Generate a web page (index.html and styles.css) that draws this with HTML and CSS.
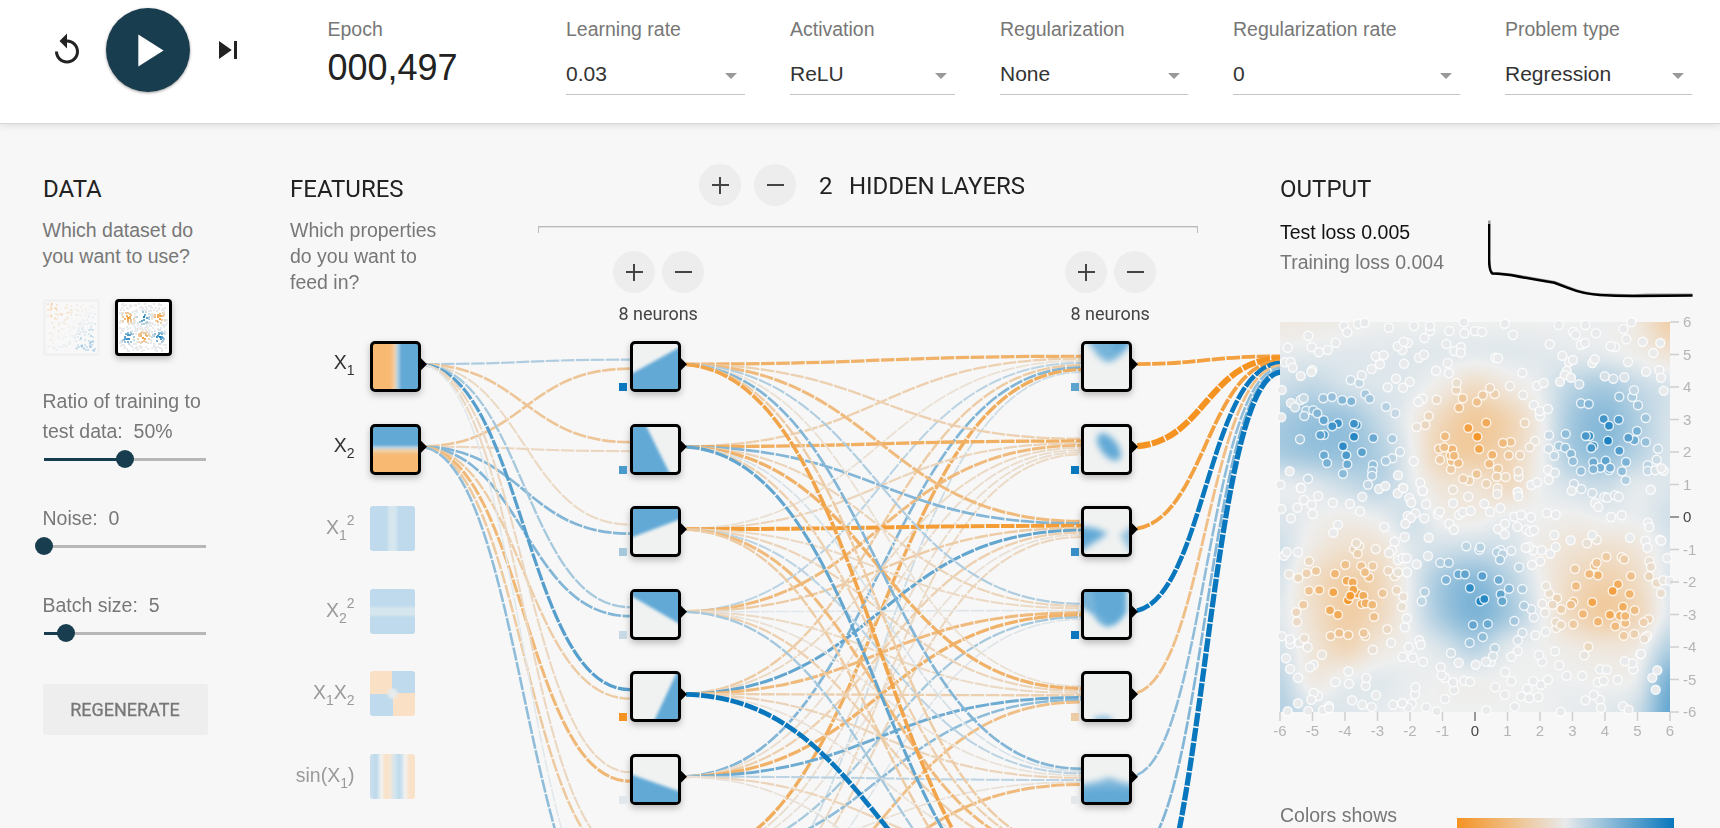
FILE: index.html
```html
<!DOCTYPE html>
<html lang="en">
<head>
<meta charset="utf-8">
<title>Neural Network Playground</title>
<link rel="stylesheet" href="styles.css">
</head>
<body>
<div class="app">
  <header class="topbar">
    <div class="controls">
      <svg class="icon" viewBox="0 0 24 24"><path d="M12 5V1L7 6l5 5V7c3.31 0 6 2.69 6 6s-2.69 6-6 6-6-2.69-6-6H4c0 4.42 3.58 8 8 8s8-3.58 8-8-3.58-8-8-8z"/></svg>
      <div class="play"><svg viewBox="0 0 24 24"><path d="M8 5v14l11-7z"/></svg></div>
      <svg class="icon" viewBox="0 0 24 24"><path d="M6 18l8.5-6L6 6v12zM16 6v12h2V6h-2z"/></svg>
    </div>
    <div class="epoch"><div class="label">Epoch</div><div class="epoch-value">000,497</div></div>
    <div class="field f-rate"><div class="label">Learning rate</div><div class="select">0.03</div></div>
    <div class="field f-act"><div class="label">Activation</div><div class="select">ReLU</div></div>
    <div class="field f-reg"><div class="label">Regularization</div><div class="select">None</div></div>
    <div class="field f-regrate"><div class="label">Regularization rate</div><div class="select">0</div></div>
    <div class="field f-problem"><div class="label">Problem type</div><div class="select">Regression</div></div>
  </header>

  <main class="main">
    <section class="column">
      <h2>DATA</h2>
      <p>Which dataset do<br>you want to use?</p>
      <div class="thumbs">
        <div class="thumb dim"><canvas id="plane" width="51" height="51"></canvas></div>
        <div class="thumb"><canvas id="gauss" width="51" height="51"></canvas></div>
      </div>
      <div class="slider-label first">Ratio of training to<br>test data:&nbsp; 50%</div>
      <div class="slider half"><span class="knob"></span></div>
      <div class="slider-label">Noise:&nbsp; 0</div>
      <div class="slider zero"><span class="knob"></span></div>
      <div class="slider-label">Batch size:&nbsp; 5</div>
      <div class="slider low"><span class="knob"></span></div>
      <div class="regenerate">REGENERATE</div>
    </section>

    <section class="column">
      <h2>FEATURES</h2>
      <p>Which properties<br>do you want to<br>feed in?</p>
    </section>

    <section class="hidden-layers">
      <div class="layers-head">
        <span class="round plus"></span><span class="round"></span>
        <span class="layers-count">2</span><span class="layers-title">HIDDEN LAYERS</span>
      </div>
      <div class="bracket"></div>
      <div class="layer-controls">
        <div class="layer-control"><div class="pair"><span class="round plus"></span><span class="round"></span></div><div class="neurons">8 neurons</div></div>
        <div class="layer-control"><div class="pair"><span class="round plus"></span><span class="round"></span></div><div class="neurons">8 neurons</div></div>
      </div>
    </section>

    <section class="column output">
      <h2>OUTPUT</h2>
      <div class="metrics">
        <div class="losses"><div class="test">Test loss 0.005</div><div class="train">Training loss 0.004</div></div>
        <svg class="chart" width="206" height="82" viewBox="0 0 206 82">
          <path class="line-train" d="M1.3 2.5V40Q1.5 54 5 55L22 56.5L44 60.3L67 64.2L88 72.3Q98 75.8 112 76.6L145 77.6L160 76.8H205"/>
          <path class="line-test" d="M1 6V42Q1.5 54.5 4.500 55.500Q16 56 24 57.300Q45 61.500 66.500 64.800L80 70Q96 76.300 112 77Q130 78.200 150 78L205 77.500"/>
        </svg>
      </div>
      <div class="plot">
        <canvas id="heat" width="130" height="130"></canvas>
        <svg id="axes" width="430" height="430"></svg>
      </div>
      <div class="legend"><span>Colors shows</span><span class="ramp"></span></div>
    </section>
  </main>

  <svg class="links" id="links" width="1720" height="828"></svg>
  <div class="nodes" id="nodes"></div>
</div>
<script src="app.js"></script>
</body>
</html>
```

FILE: styles.css
```css
* { box-sizing: border-box; }
body { margin: 0; background: #f7f7f7; font-family: "Liberation Sans", Arial, sans-serif; color: #222; }
.app { position: relative; width: 1720px; height: 828px; overflow: hidden; }

.topbar { display: flex; height: 124px; background: #fff; border-bottom: 1px solid #d8d8d8; box-shadow: 0 1px 8px rgba(0,0,0,.12); }
.controls { display: flex; align-items: center; width: 327.500px; height: 100px; padding-left: 48.500px; gap: 21px; }
.icon { width: 36px; height: 36px; fill: #222; }
.play { display: flex; align-items: center; justify-content: center; width: 84px; height: 84px; border-radius: 50%; background: #183d4e; box-shadow: 0 1px 3px rgba(0,0,0,.4); }
.play svg { width: 55px; height: 55px; fill: #fff; }
.icon:last-child { margin-left: -1px; }
.epoch { width: 238.500px; padding-top: 16px; }
.label { font-size: 19.5px; line-height: 26px; color: #777; white-space: nowrap; }
.epoch-value { font-size: 36px; line-height: 40px; padding-top: 6px; }
.field { padding-top: 16px; }
.select { position: relative; height: 36px; margin-top: 17px; border-bottom: 1px solid #c4c4c4; font-size: 21px; line-height: 28px; padding-top: 1px; color: #333; }
.select::after { content: ""; position: absolute; right: 8px; top: 14px; border: 6px solid transparent; border-top-color: #999; border-bottom-width: 0; }
.f-rate { width: 179px; margin-right: 45px; }
.f-act { width: 165px; margin-right: 45px; }
.f-reg { width: 188px; margin-right: 45px; }
.f-regrate { width: 227px; margin-right: 45px; }
.f-problem { width: 187px; }

.main { display: grid; grid-template-columns: 165px 166px 660px 413px; column-gap: 82px; padding: 40px 0 0 43px; }
.column { padding-top: 9.5px; }
h2 { margin: 0; font: 400 24px/30px Roboto, sans-serif; color: #222; }
p { margin: 13.5px 0 0; font-size: 19.5px; line-height: 26px; color: #777; white-space: nowrap; }
.column:first-child p, .slider-label { margin-left: -.5px; }
.thumbs { display: flex; gap: 15px; margin-top: 30px; }
.thumb { width: 57px; height: 57px; border: 3px solid #000; border-radius: 4px; background: #fff; box-shadow: 0 3px 6px rgba(0,0,0,.25); }
.thumb.dim { border-color: #f1f1f1; background: #f8f8f8; box-shadow: none; }
.thumb canvas { display: block; }
.slider-label { margin-top: 35px; font-size: 19.5px; line-height: 30px; color: #777; white-space: nowrap; }
.slider-label.first { margin-top: 30px; }
.slider { display: flex; align-items: center; width: 162px; height: 18px; margin: 4px 0 0 1px; background: linear-gradient(#b7b7b7,#b7b7b7) center / 100% 3px no-repeat; }
.knob { flex: none; width: 18px; height: 18px; border-radius: 50%; background: #183d4e; margin-left: -9px; }
.half { background: linear-gradient(90deg,#183d4e 50%,#b7b7b7 50%) center / 100% 3px no-repeat; }
.half .knob { margin-left: 72px; }
.low { background: linear-gradient(90deg,#183d4e 13%,#b7b7b7 13%) center / 100% 3px no-repeat; }
.low .knob { margin-left: 13px; }
.regenerate { margin-top: 42px; height: 51px; padding-right: 1px; border-radius: 3px; background: #eee; color: #777; font: 400 18px/51px Roboto, sans-serif; text-align: center; -webkit-text-stroke: .3px #777; }

.layers-head { display: flex; align-items: center; padding-left: 161px; font: 400 24px/30px Roboto, sans-serif; }
.layers-head .round + .round { margin-left: 13px; }
.layers-count { margin-left: 23px; padding-top: 1px; }
.layers-title { margin-left: 16.500px; padding-top: 1px; white-space: nowrap; letter-spacing: -.05px; }
.round { flex: none; width: 42px; height: 42px; border-radius: 50%; background: linear-gradient(#444,#444) center / 17px 2px no-repeat, #ededed; }
.round.plus { background: linear-gradient(#444,#444) center / 17px 2px no-repeat, linear-gradient(#444,#444) center / 2px 17px no-repeat, #ededed; }
.bracket { height: 7px; margin-top: 20px; border: 1px solid #bbb; border-bottom: 0; box-shadow: inset 0 1px 0 #e0e0e0; }
.layer-controls { display: flex; gap: 360px; padding-left: 75px; margin-top: 18px; }
.layer-control { width: 92px; }
.pair { display: flex; gap: 7px; }
.neurons { margin: 9px 0 0 5.5px; font: 400 18px/24px Roboto, sans-serif; color: #444; white-space: nowrap; }

.metrics { display: flex; height: 118.5px; padding-top: 13px; }
.losses { width: 208px; font-size: 19.5px; line-height: 30px; white-space: nowrap; }
.test { color: #111; }
.train { color: #777; }
.chart { margin-top: 1px; }
.chart path { fill: none; stroke-width: 2.5; }
.chart .line-train { stroke: #999; }
.chart .line-test { stroke: #000; }
.plot { position: relative; z-index: 3; width: 390px; height: 390px; }
.plot canvas { display: block; width: 390px; height: 390px; }
#axes { position: absolute; left: 0; top: 0; overflow: visible; }
#axes text { font-size: 15px; fill: #b5b5b5; }
#axes line { stroke: #cfcfcf; stroke-width: 1.5; }
#axes .origin { fill: #444; }
#axes line.origin { stroke: #999; stroke-width: 2; }
#axes circle { stroke: #fff; stroke-width: 1.4; stroke-opacity: .8; }
.legend { display: flex; margin-top: 89.500px; font-size: 19.5px; line-height: 26px; color: #777; }
.legend span:first-child { width: 177px; }
.ramp { width: 217px; height: 14px; margin-top: 16px; background: linear-gradient(90deg,#f59322,#e8eaeb,#0877bd); }

.links { position: absolute; left: 0; top: 0; }
.links path { fill: none; stroke-dasharray: 13.5 1.5; stroke-dashoffset: 7; }
.links .port { fill: #000; }
.links text { font-size: 19.5px; fill: #333; text-anchor: end; }
.links text .small { font-size: 14px; }
.links text.off { fill: #9a9a9a; }
.nodes { position: absolute; left: 0; top: 0; }
.node { position: absolute; width: 51px; height: 51px; border: 3px solid #000; border-radius: 5px; background: #f0f2f1; overflow: hidden; box-shadow: 0 3px 7px rgba(0,0,0,.25); }
.node svg { display: block; }
.node.off { width: 45px; height: 45px; border: 0; border-radius: 3px; box-shadow: none; }
.bias { position: absolute; width: 8px; height: 8px; }
.x1 { background: linear-gradient(90deg,#f8b973 38%,#f0d0a8 48%,#b9d2e2 54%,#62a9d6 64%); }
.x2 { background: linear-gradient(#62a9d6 38%,#b9d2e2 46%,#f0d0a8 52%,#f8b973 62%); }
.x1sq { background: linear-gradient(90deg,#bedaec 36%,#d5e6ee 44%,#d5e6ee 56%,#bedaec 64%); }
.x2sq { background: linear-gradient(#bedaec 36%,#d5e6ee 44%,#d5e6ee 56%,#bedaec 64%); }
.x1x2 { background: radial-gradient(circle,#e6ebec 0 3px,transparent 7px), conic-gradient(#bedaec 90deg,#fae0c4 90deg 180deg,#bedaec 180deg 270deg,#fae0c4 270deg); }
.sinx1 { background: linear-gradient(90deg,#cbe0ee 0,#bedaec 14%,#f1f2f1 25%,#fae2c8 34%,#f6e5d2 44%,#d5e5ee 54%,#bedaec 66%,#f1f2f1 78%,#fae2c8 88%,#fae2c8); }
```

FILE: app.js
```js
const NS = 'http://www.w3.org/2000/svg';
function el(name, attrs, parent) {
  const e = document.createElementNS(NS, name);
  for (const k in attrs) e.setAttribute(k, attrs[k]);
  parent.appendChild(e);
  return e;
}
function mix(v, mid) {
  const end = v < 0 ? [245, 147, 34] : [8, 119, 189];
  const t = Math.min(1, Math.abs(v));
  return (mid || [232, 234, 235]).map((c, i) => Math.round(c + (end[i] - c) * t));
}
const rgb = c => 'rgb(' + c.join(',') + ')';

// ---- network ----
const rowTop = i => 341.25 + 82.5 * i;
const rowMid = i => rowTop(i) + 22.9;
const links = document.getElementById('links');
const nodes = document.getElementById('nodes');

function link(x1, y1, x2, y2, w) {
  const m = (x1 + x2) / 2;
  el('path', {
    d: `M${x1},${y1}C${m},${y1} ${m},${y2} ${x2},${y2}`,
    stroke: rgb(mix(w)), 'stroke-width': 1.5 + 2.7 * Math.abs(w)
  }, links);
}
// weights[target][source]
const first = [[.25, -.42], [-.42, -.22], [-.2, .45], [.3, .45], [.65, -.35], [-.22, -.58], [-.22, -.38], [.03, .4]];
const second = [
  [-.65, -.3, -.12, .2, -.35, .45, -.7, .12],
  [-.3, -.68, -.25, -.55, -.2, -.15, -.15, -.2],
  [-.55, .45, -.9, -.35, .6, -.3, -.1, -.22],
  [.25, -.25, -.2, .04, -.55, -.65, .3, .04],
  [-.12, -.65, -.25, -.2, -.3, .55, .4, -.5],
  [.45, .08, .2, -.1, -.25, .2, -.1, -.55],
  [-.35, -.3, -.55, -.3, -.1, -.25, .3, -.2],
  [-.8, .6, -.35, .3, 1.2, -.1, .15, -.3]
];
const last = [-.85, -1.7, -.85, 1.15, -.5, .4, .45, 1.4];
first.forEach((ws, t) => ws.forEach((w, s) => link(418, rowMid(s), 630, rowMid(t) + (s - .5) * 9, w)));
second.forEach((ws, t) => ws.forEach((w, s) => link(678, rowMid(s), 1081, rowMid(t) + (s - 3.5) * 2.25, w)));
last.forEach((w, s) => link(1129, rowMid(s), 1282, rowMid(0) + (s - 3.5) * 2.25, w));

function port(x, y) { el('polygon', { class: 'port', points: `${x},${y - 6} ${x + 6},${y} ${x},${y + 6}` }, links); }

const labels = ['X|1', 'X|2', 'X|1^2', 'X|2^2', 'X|1X|2', 'sin(X|1)'];
function featureLabel(text, i) {
  const t = el('text', { x: 354.5, y: rowTop(i) + 28, class: i > 1 ? 'off' : '' }, links);
  let level = 0;
  for (const m of text.matchAll(/\|(\d)|\^(\d)|([^|^]+)/g)) {
    const next = m[1] ? 6 : m[2] ? -9 : 0;
    const s = el('tspan', { dy: next - level, class: next ? 'small' : '' }, t);
    s.textContent = m[1] || m[2] || m[3];
    level = next;
  }
}
labels.forEach(featureLabel);

function node(x, y, cls, inner) {
  const d = document.createElement('div');
  d.className = 'node ' + cls;
  d.style.left = x + 'px';
  d.style.top = y + 'px';
  d.innerHTML = inner || '';
  nodes.appendChild(d);
}
['x1', 'x2', 'x1sq off', 'x2sq off', 'x1x2 off', 'sinx1 off'].forEach((c, i) => node(370, rowTop(i), c));
port(421, rowMid(0)); port(421, rowMid(1));

const art = (shape, blur) => `<svg width="45" height="45"><g style="filter:blur(${blur}px)" fill="#62a9d6">${shape}</g></svg>`;
const layerOne = [
  '<path d="M-20 40.100L65 -7.100V80H-20z"/>', '<path d="M8.700 -10L41 55H-30V-10z"/>',
  '<path d="M-20 35.600L65 3.400V-20H-20z"/>', '<path d="M-20 -6.500L65 42.500V-20H-20z"/>',
  '<path d="M47.700 -10L17.300 55H80V-10z"/>', '<path d="M-20 11L65 41V80H-20z"/>'
].map(s => art(s, 1.7));
const layerTwo = [
  art('<path d="M0 -8H52L43 5Q36 14 26 18Q20 18 14 12z" opacity=".85"/><path d="M24 -8H50L40 5L30 8z"/>', 3),
  art('<ellipse cx="25" cy="20" rx="16" ry="8.500" transform="rotate(52 25 20)"/>', 3.2),
  art('<path d="M-8 17L10 19L24 24L14 31L-8 45z"/><path d="M50 15L36 26L42 36L50 48z" opacity=".65"/>', 3.2),
  art('<path d="M-2 -8H43V20Q34 35 23 35Q14 33 10 24L-6 12z" opacity=".85"/><path d="M8 -4H40V20Q34 31 24 32L12 20z"/>', 2.6),
  art('<ellipse cx="19" cy="45.500" rx="10" ry="4" opacity=".6"/>', 2.4),
  art('<path d="M-10 28Q12 26 25 20.500Q38 26 60 29V60H-10z" opacity=".8"/><path d="M-10 35Q25 27 60 35V60H-10z"/>', 3)
];
const biasOne = [1, .7, .3, .15, -1, .03], biasTwo = [.62, 1, .8, 1, -.35, .02];
for (let i = 0; i < 6; i++) {
  [[630, layerOne, biasOne, 619], [1081, layerTwo, biasTwo, 1071]].forEach(([x, pics, bias, bx]) => {
    node(x, rowTop(i), '', pics[i]);
    port(x + 51, rowMid(i));
    const b = document.createElement('div');
    b.className = 'bias';
    b.style.cssText = `left:${bx}px;top:${rowTop(i) + 42}px;background:${rgb(mix(bias[i]))}`;
    nodes.appendChild(b);
  });
}

// ---- output surface, one value per unit of the 12 x 12 domain ----
const surface = [
  [-.07, -.05, -.03, 0, 0, 0, 0, 0, 0, 0, 0, -.08, -.34],
  [.04, .05, .06, .06, .06, .05, .04, .05, .05, .05, .04, -.02, -.12],
  [.15, .2, .12, .08, .05, -.06, -.2, -.08, .03, .22, .3, .18, .1],
  [.3, .37, .36, .18, 0, -.25, -.4, -.3, -.03, .32, .44, .27, .1],
  [.3, .36, .38, .27, .02, -.3, -.38, -.28, -.02, .31, .4, .23, .09],
  [.03, .07, .16, .22, .05, -.12, -.14, -.22, 0, .12, .16, .05, .08],
  [.08, .01, -.03, .02, .12, -.02, -.04, .02, 0, -.02, .02, .02, .12],
  [.12, -.06, -.16, -.14, .06, .13, .16, .12, -.04, -.13, -.16, -.1, .08],
  [.08, -.18, -.34, -.26, .03, .33, .44, .26, 0, -.22, -.32, -.2, .07],
  [.05, -.16, -.35, -.24, .02, .32, .48, .32, .03, -.24, -.38, -.25, .07],
  [.1, -.1, -.26, -.09, 0, .1, .24, .06, 0, -.06, -.1, -.06, .25],
  [.2, -.06, .01, .05, .02, 0, 0, 0, 0, 0, -.02, .04, .5],
  [.25, .1, .07, .04, 0, 0, 0, 0, 0, .03, .05, .15, .6]
];
function cubic(a, b, c, d, t) {
  return b + .5 * t * (c - a + t * (2 * a - 5 * b + 4 * c - d + t * (3 * (b - c) + d - a)));
}
const at = (r, c) => surface[Math.max(0, Math.min(12, r))][Math.max(0, Math.min(12, c))];
function sample(x, y) {
  const c = Math.floor(x), r = Math.floor(y);
  const rows = [-1, 0, 1, 2].map(k => cubic(at(r + k, c - 1), at(r + k, c), at(r + k, c + 1), at(r + k, c + 2), x - c));
  return cubic(...rows, y - r);
}
const heat = document.getElementById('heat').getContext('2d');
const img = heat.createImageData(130, 130);
for (let j = 0; j < 130; j++) for (let i = 0; i < 130; i++) {
  const c = mix(sample((i + .5) / 130 * 12, (j + .5) / 130 * 12), [238, 239, 239]);
  img.data.set([...c, 255], (j * 130 + i) * 4);
}
heat.putImageData(img, 0, 0);

// ---- data points, three units per pixel ----
const upper = '222,498 232,517 264,492 284,488 197,548 115,527 125,562 173,570 147,577 53,563 45,607 62,606 68,623 92,648 127,630 124,636 35,690 34,772 63,729 75,742 92,720 101,715 109,752 103,768 130,751 142,760 160,715 186,711 217,720 244,724 242,660 268,669 275,646 305,627 330,613 317,589 341,586 286,702 299,716 348,740 376,760 353,682 378,656 399,683 419,665 402,611 397,570 383,559 413,549 401,545 356,503 432,498 480,513 480,498 463,534 447,593 462,584 498,632 533,609 537,640 529,552 538,513 581,487 583,520 615,513 636,516 553,573 573,562 572,578 704,491 729,525 676,593 684,595 757,638 720,678 759,705 802,677 821,669 791,735 810,768 809,753 834,747 839,553 866,495 910,516 917,524 946,495 978,520 933,554 945,549 877,587 897,606 909,600 967,609 974,598 890,632 884,645 903,653 870,665 928,673 1004,649 1030,656 1063,652 1074,606 1035,561 1022,559 1069,538 1060,507 1084,487 1118,545 1171,549 1150,579 1168,631 1173,653 1128,635 1181,692 1087,711 1092,691 1104,736 1048,710 1127,774 933,730 956,732 1001,777 1046,779 1017,797 1101,813 1093,841 1075,833 1127,846 958,828 947,828 1014,842 970,858 964,864 887,822 837,826 836,866 867,858 886,863 853,887 903,881 909,904 1048,872 1007,902 970,907 991,923 970,928 1017,930 1020,923 1068,906 1056,934 1067,961 933,933 834,929 855,938 836,959 1133,916 1133,932 1156,931 1160,899 1164,866 1181,932 1174,925 1142,989 912,972 905,992 934,987 784,975 801,967 764,789 795,843 779,862 722,846 699,849 716,886 750,886 746,950 745,934 743,996 684,926 680,950 707,951 658,911 667,884 649,971 620,942 598,962 580,956 549,989 543,928 545,903 565,909 542,886 547,868 552,887 507,866 523,862 510,899 525,829 595,804 622,830 649,788 627,867 621,726 638,706 674,702 660,684 578,715 567,743 559,690 560,669 500,719 476,768 466,795 440,801 458,716 445,725 431,904 451,968 458,993 384,946 399,984 390,875 367,836 367,895 347,903 310,834 309,915 307,933 306,947 294,974 327,987 346,978 276,877 260,795 252,791 252,830 204,790 187,799 161,781 162,824 151,825 219,859 229,886 232,913 219,941 162,886 171,909 90,838 59,934 31,974 92,983 114,956 683,985';
const lower = '145,24 93,0 102,36 125,50 128,78 82,59 63,91 34,63 188,44 240,47 277,26 270,70 383,16 400,0 418,30 424,44 458,8 468,49 436,76 413,84 422,90 406,107 463,91 504,79 509,71 549,46 567,80 578,72 602,68 595,26 643,47 660,71 691,60 682,18 743,13 745,25 783,88 733,86 753,81 705,107 684,123 704,139 742,116 769,125 780,131 792,127 831,75 857,80 853,141 902,157 967,15 975,45 985,57 1003,27 1012,29 1035,22 1046,26 1055,82 1023,87 1134,104 1138,117 1126,158 1132,179 1170,155 1174,158 1080,149 980,155 967,141 951,166 1192,210 1138,220 1143,237 1137,265 1160,285 1180,277 1199,279 1173,316 1083,264 1044,289 1028,309 1079,318 967,343 984,262 958,258 974,233 980,224 1009,206 1055,208 1063,214 915,243 918,294 910,341 903,350 874,364 861,331 848,350 838,316 828,294 811,220 786,231 790,187 815,187 841,197 857,177 776,177 767,179 747,238 757,303 717,302 724,188 691,186 681,193 698,199 690,215 686,276 637,264 565,259 585,259 600,300 631,340 643,333 692,319 697,340 589,175 628,185 631,178 511,224 536,224 528,276 474,204 440,229 476,149 538,107 552,125 404,147 374,161 343,117 317,183 366,187 357,195 384,216 398,211 410,211 411,253 374,264 384,253 355,248 380,307 400,326 396,356 338,316 308,234 274,234 297,268 285,253 226,230 195,257 230,278 248,283 262,317 250,305 280,323 234,337 241,323 190,313 148,306 117,308 110,256 138,249 117,220 84,192 42,203 50,192 57,259 85,270 100,350 79,373 81,401 180,367 204,380 275,348 287,346 307,350 312,386 352,424 404,418 410,391 455,340 464,312 204,110 190,134 252,183 268,175 259,166 263,197 182,444 208,435 235,441 286,443 281,435 308,485 363,464 416,478 398,506 428,509 459,521 448,457 452,470 512,538 525,569 515,562 552,606 549,583 566,524 543,495 599,464 638,447 674,481 662,522 669,505 648,521 617,530 609,411 653,408 733,399 757,434 743,457 743,489 724,506 706,552 724,579 676,598 704,620 754,625 778,630 805,627 772,602 790,579 813,590 834,575 817,521 807,501 855,490 868,532 890,563 937,563 990,544 1010,545 984,583 1001,578 1043,575 989,635 971,621 993,660 946,637 1059,655 1076,665 1090,544 1087,526 1064,520 1111,499 1113,498 1162,547 1147,569 1157,605 943,502 955,476 1093,438 1061,443 1036,415 1066,405 1050,383 1066,384 1020,380 1059,356 1094,367 1136,394 1121,403 1132,443 1128,447 1123,452 984,401 939,378 910,409 859,420 858,402 873,411 827,431 796,442 791,388 784,364 762,353 825,374 817,347 583,578 600,581 525,633 500,670 468,658 435,619 436,598 425,647 415,659 397,646 369,650 318,622 305,657 277,650 246,637 287,593 289,570 235,550 237,587 196,582 156,500 131,530 120,538 84,569 60,543 48,511 61,468 60,454 88,464 103,451 113,478 35,445 144,624 131,615 124,635 84,646 53,670 115,669 159,667 177,655 177,661 649,667 734,656 872,671';
const parse = (s, oy) => s.split(' ').map(p => { const [x, y] = p.split(',').map(Number); return [(x - 30) / 3, (y - oy) / 3]; });
const points = parse(upper, 486).concat(parse(lower, -498));
const peaks = [[-4, 2.5, 1], [0, 2.5, -1], [4, 2.5, 1], [-4, -2.5, -1], [0, -2.5, 1], [4, -2.5, -1]];
function target(x, y) {
  let best = 0;
  for (const [px, py, s] of peaks) {
    const v = s * Math.max(0, 1 - Math.hypot(x - px, y - py) / 2);
    if (Math.abs(v) > Math.abs(best)) best = v;
  }
  return best;
}
const axes = document.getElementById('axes');
for (const [x, y] of points) {
  el('circle', { cx: x.toFixed(1), cy: y.toFixed(1), r: 4.5, fill: rgb(mix(target(x / 32.5 - 6, 6 - y / 32.5))) }, axes);
}
for (let v = -6; v <= 6; v++) {
  const x = (v + 6) * 32.5, y = (6 - v) * 32.5, cls = v ? '' : 'origin';
  el('line', { x1: x, x2: x, y1: 390, y2: 399, class: cls }, axes);
  el('line', { x1: 390, x2: 399, y1: y, y2: y, class: cls }, axes);
  el('text', { x, y: 413.7, 'text-anchor': 'middle', class: cls }, axes).textContent = v;
  el('text', { x: 403, y: y + 5, class: cls }, axes).textContent = v;
}

// ---- dataset thumbnails ----
let seed = 7;
const rnd = () => (seed = (seed * 16807) % 2147483647) / 2147483647;
const gauss = document.getElementById('gauss').getContext('2d');
points.forEach(([x, y], i) => {
  if (i % 2) return;
  gauss.fillStyle = rgb(mix(target(x / 32.5 - 6, 6 - y / 32.5)));
  gauss.fillRect(Math.round(1 + x / 390 * 47), Math.round(48 - y / 390 * 47), 2, 2);
});
const plane = document.getElementById('plane').getContext('2d');
plane.globalAlpha = .2;
for (let i = 0; i < 210; i++) {
  const x = rnd(), y = rnd();
  plane.fillStyle = rgb(mix((x + y - 1) * 1.1));
  plane.fillRect(Math.round(1 + x * 47), Math.round(1 + y * 47), 2, 2);
}
```
